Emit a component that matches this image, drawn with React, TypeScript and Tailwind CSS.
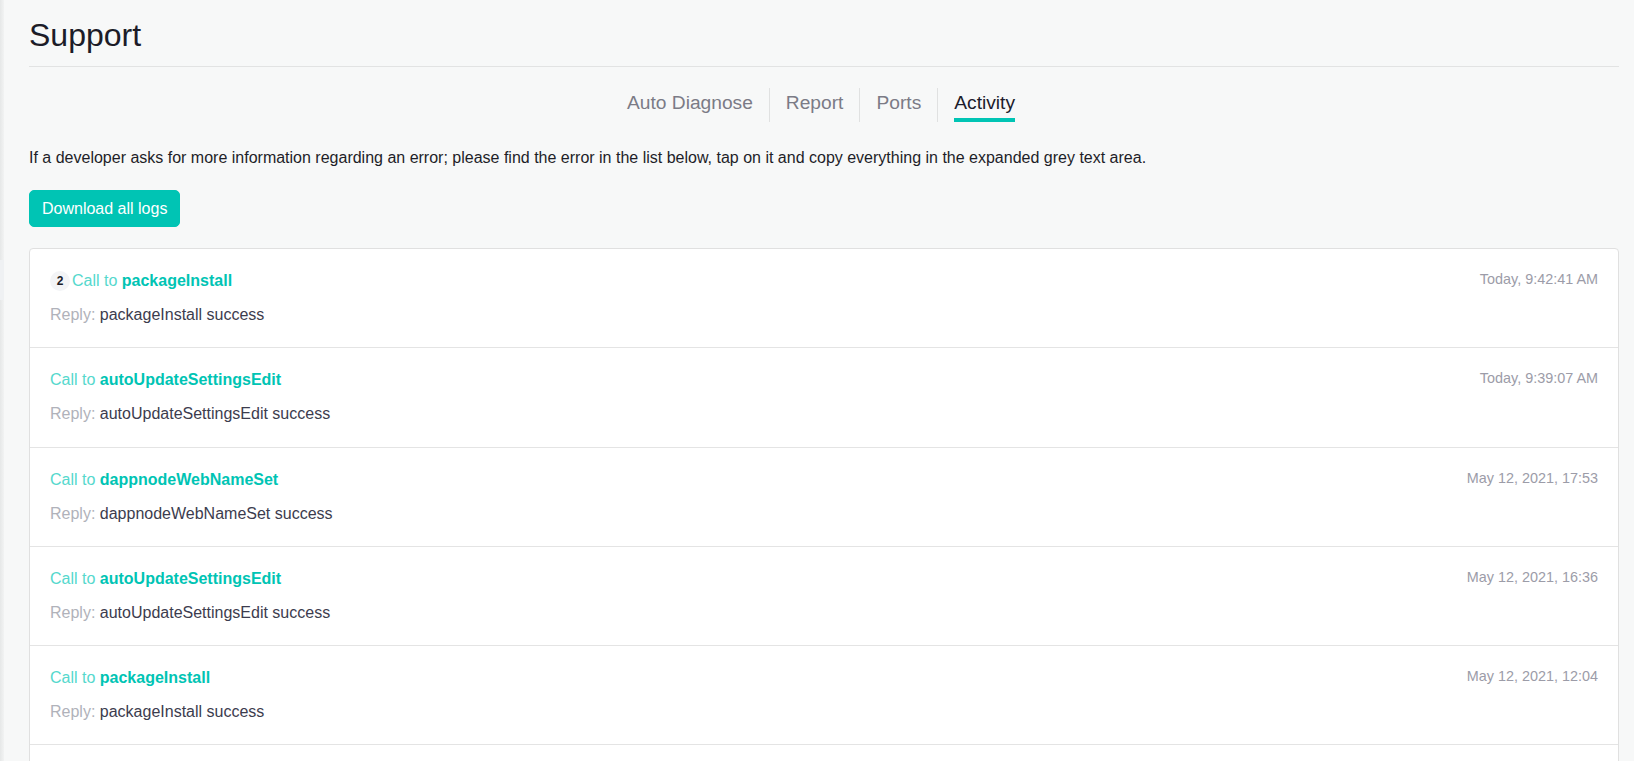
import React from "react";

type LogRow = {
   count?: number;
   route: string;
   reply: string;
   time: string;
};

const rows: LogRow[] = [
   { count: 2, route: "packageInstall", reply: "packageInstall success", time: "Today, 9:42:41 AM" },
   { route: "autoUpdateSettingsEdit", reply: "autoUpdateSettingsEdit success", time: "Today, 9:39:07 AM" },
   { route: "dappnodeWebNameSet", reply: "dappnodeWebNameSet success", time: "May 12, 2021, 17:53" },
   { route: "autoUpdateSettingsEdit", reply: "autoUpdateSettingsEdit success", time: "May 12, 2021, 16:36" },
   { route: "packageInstall", reply: "packageInstall success", time: "May 12, 2021, 12:04" },
   { route: "packageStartStop", reply: "packageStartStop success", time: "May 12, 2021, 11:58" }
];

const tabs = ["Auto Diagnose", "Report", "Ports", "Activity"];

const ActivityRow = ({ row }: { row: LogRow }) => (
   <div className="flex flex-row items-start justify-between px-5 pt-5 pb-[20.25px] border-b border-[#e4e4e4] last:border-b-0">
      <div className="flex flex-col gap-[10px]">
         <div className="flex flex-row items-center leading-6 text-base">
            {row.count !== undefined && (
               <span className="inline-flex items-center justify-center w-5 h-5 mr-[2px] rounded-full bg-[#f3f4f6] text-[12px] font-bold text-[#1c1c28]">
                  {row.count}
               </span>
            )}
            <span className="text-[#55d8cd]">Call to&nbsp;</span>
            <span className="font-bold text-[#00c4b4]">{row.route}</span>
         </div>
         <div className="leading-6 text-base">
            <span className="text-[#b0b2ba]">Reply: </span>
            <span className="text-[#3c3c4e]">{row.reply}</span>
         </div>
      </div>
      <div className="text-[14.4px] leading-[20px] text-[#9c9ca8]">{row.time}</div>
   </div>
);

export default function App() {
   const active = "Activity";

   return (
      <div
         className="flex flex-row min-h-screen bg-[#f7f8f8]"
         style={{ fontFamily: '"Liberation Sans", Arial, sans-serif' }}
      >
         <div className="w-[4px] shrink-0 bg-gradient-to-r from-[#e6e8e8] to-[#f2f3f3]">
            <div className="mt-[260px] h-[40px] bg-[#eff1f3]" />
         </div>

         <main className="flex-1 pl-[25px] pr-[15px] pt-4 pb-10">
            <h1 className="text-[32px] leading-[38px] text-[#1c1c28] pb-3 border-b border-[#e2e3e3]">
               Support
            </h1>

            <div className="flex flex-row justify-center mt-[21px] pr-[6px]">
               {tabs.map((tab, i) => (
                  <div
                     key={tab}
                     className={
                        "h-[34px] px-4 pt-1 flex flex-col items-center " +
                        (i > 0 ? "border-l border-[#e0e1e1]" : "")
                     }
                  >
                     <span
                        className={
                           "text-[19.2px] leading-[22px] " +
                           (tab === active ? "text-[#1c1c2c]" : "text-[#7b7b86]")
                        }
                     >
                        {tab}
                     </span>
                     {tab === active && <span className="mt-1 h-1 w-full bg-[#00c4b4]" />}
                  </div>
               ))}
            </div>

            <p className="mt-6 text-base leading-6 text-[#1e1e28]">
               If a developer asks for more information regarding an error; please find the error in the
               list below, tap on it and copy everything in the expanded grey text area.
            </p>

            <button className="mt-5 h-[37px] px-3 border border-[#00c4b4] rounded-[5px] bg-[#00c4b4] text-white text-base leading-6">
               Download all logs
            </button>

            <div className="mt-[21px] bg-white border border-[#e0e0e0] rounded-[4px]">
               {rows.map((row, i) => (
                  <ActivityRow key={i} row={row} />
               ))}
            </div>
         </main>
      </div>
   );
}
